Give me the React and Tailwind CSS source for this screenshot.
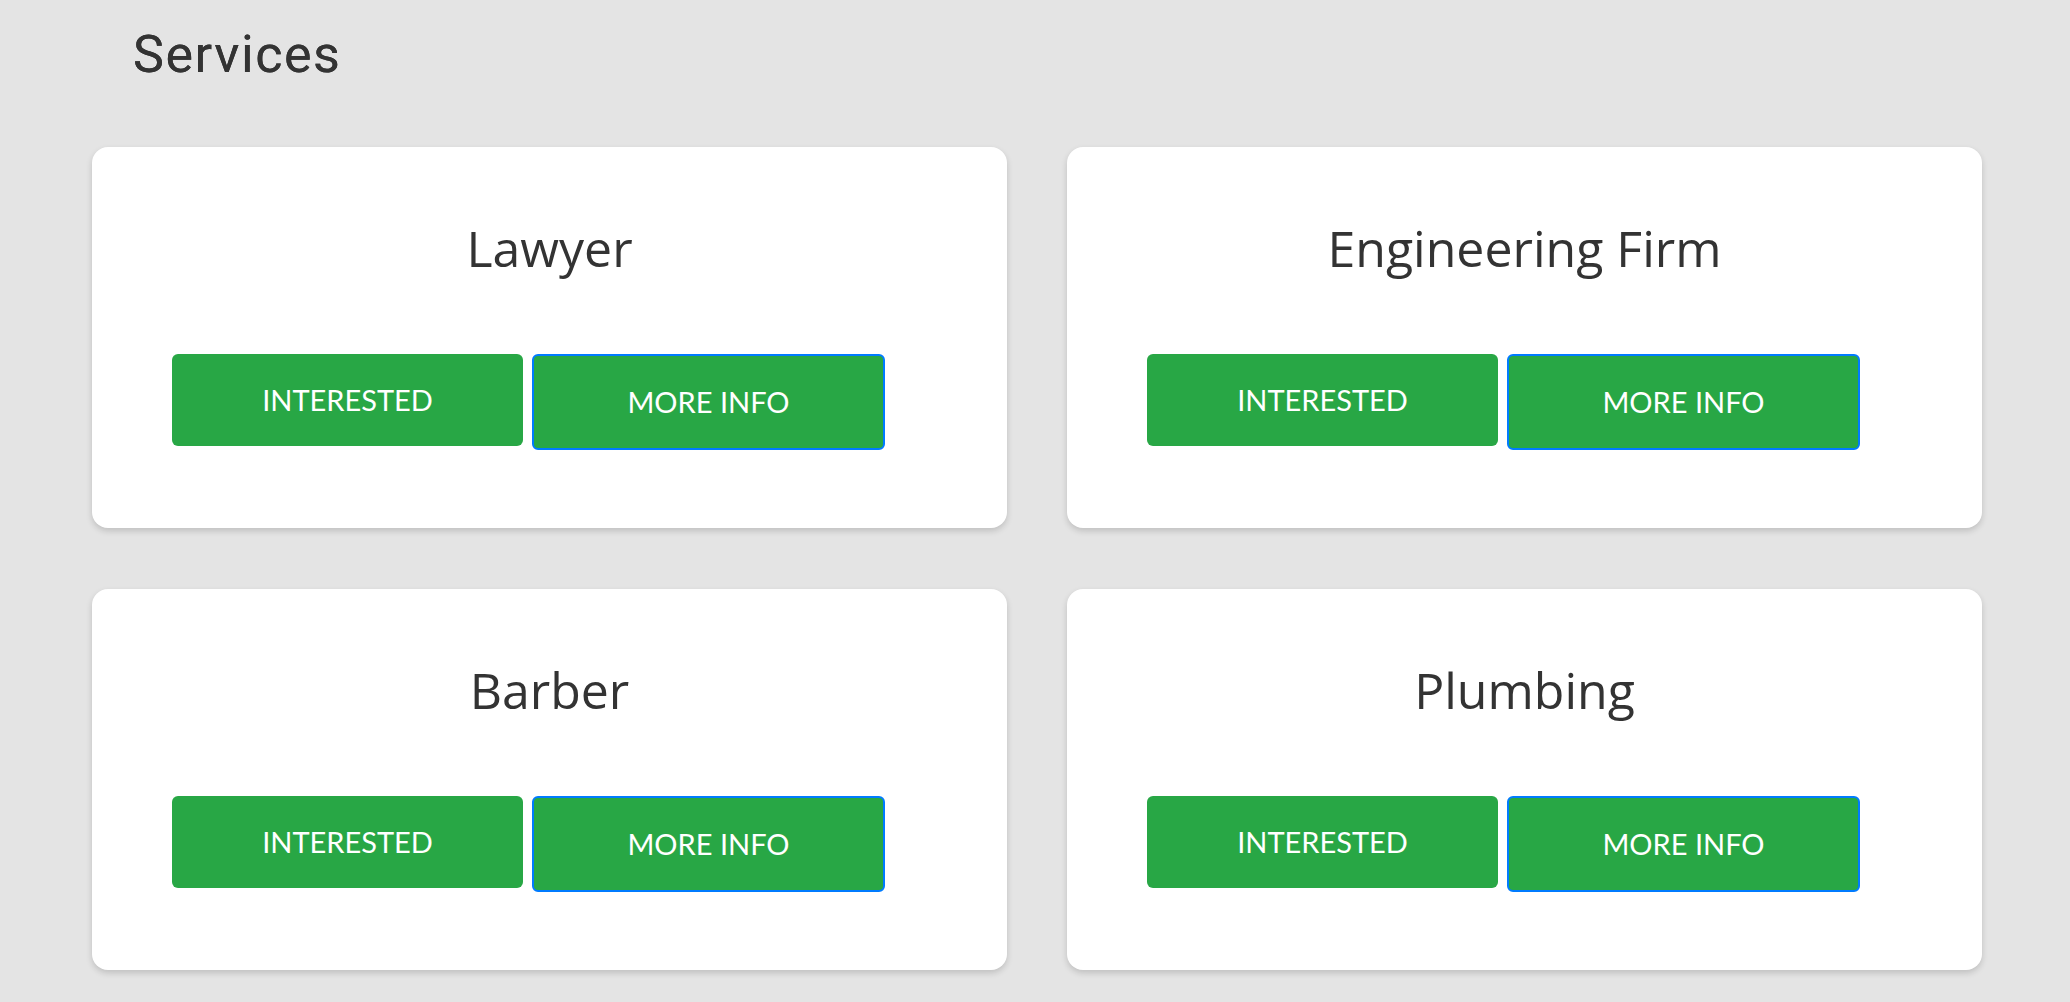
import React from 'react';

const services = ['Lawyer', 'Engineering Firm', 'Barber', 'Plumbing'];

function ServiceCard({ name }) {
  return (
    <div className="h-[381px] rounded-2xl bg-white pt-[76px] shadow-[0_3px_6px_rgba(0,0,0,0.16)]">
      <h2 className="text-center font-['Open_Sans',sans-serif] text-[50px] font-normal leading-none text-[#333333]">
        {name}
      </h2>
      <div className="mt-[81px] flex items-start gap-[9px] pl-[80px]">
        <button className="flex h-[92px] w-[351px] items-center justify-center rounded-md bg-[#28a745] font-['Lato',sans-serif] text-[29px] uppercase text-white">
          Interested
        </button>
        <button className="flex h-[96px] w-[353px] items-center justify-center rounded-md border-2 border-[#007bff] bg-[#28a745] font-['Lato',sans-serif] text-[29px] uppercase text-white">
          More Info
        </button>
      </div>
    </div>
  );
}

export default function App() {
  return (
    <div className="min-h-screen bg-[#e4e4e4] pl-[92px] pr-[88px]">
      {/* ─── HEADER ───────────────────────────────────────────── */}
      <h1 className="pl-[41px] pt-[29px] font-['Roboto',sans-serif] text-[52px] font-normal leading-none tracking-[0.03em] text-[#333333] [text-shadow:0_0_0.4px_#333333]">
        Services
      </h1>

      {/* ─── CARDS ────────────────────────────────────────────── */}
      <div className="mt-[66px] grid grid-cols-2 gap-x-[60px] gap-y-[61px]">
        {services.map((s) => (
          <ServiceCard key={s} name={s} />
        ))}
      </div>
    </div>
  );
}
